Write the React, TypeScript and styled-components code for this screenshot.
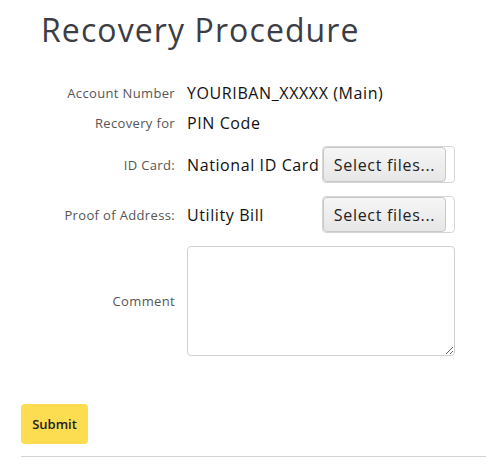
import React from 'react'
import styled, { createGlobalStyle } from 'styled-components'

const GlobalStyle = createGlobalStyle`
  body {
    margin: 0;
    background: #fff;
    font-family: 'Open Sans', 'Noto Sans', sans-serif;
  }
`

const Page = styled.div`
  padding: 0 15px 0 21px;
`

const Title = styled.h1`
  margin: 0;
  padding: 10px 0 0 20px;
  height: 68px;
  box-sizing: border-box;
  font-size: 32px;
  font-weight: 400;
  letter-spacing: 1.1px;
  color: #3c3d45;
  line-height: 40px;
`

const Form = styled.form`
  display: flex;
  flex-direction: column;
`

const Row = styled.div<{ $height: number; $gap?: number }>`
  display: grid;
  grid-template-columns: 154px 268px;
  column-gap: 12px;
  align-items: center;
  height: ${p => p.$height}px;
  margin-top: ${p => p.$gap || 0}px;
`

const Label = styled.label`
  text-align: right;
  font-size: 13px;
  letter-spacing: 0.35px;
  color: #555;
`

const Value = styled.div`
  display: flex;
  align-items: center;
  font-size: 16px;
  letter-spacing: 0.6px;
  color: #111;
`

const FileName = styled.span`
  width: 135px;
  white-space: nowrap;
`

const Upload = styled.div`
  display: flex;
  width: 133px;
  height: 37px;
  box-sizing: border-box;
  border: 1px solid #d5d5d5;
  border-radius: 4px;
`

const SelectButton = styled.button`
  width: 123px;
  height: 35px;
  margin: 0;
  padding: 0;
  box-sizing: border-box;
  border: 1px solid #c8c8c8;
  border-radius: 4px;
  background: linear-gradient(#f6f6f6, #e6e6e6);
  font-family: inherit;
  font-size: 16px;
  letter-spacing: 0.7px;
  color: #222;
`

const Comment = styled.textarea`
  width: 268px;
  height: 110px;
  box-sizing: border-box;
  border: 1px solid #d0d0d0;
  border-radius: 4px;
  resize: both;
`

const Submit = styled.button`
  margin-top: 48px;
  align-self: flex-start;
  width: 67px;
  height: 40px;
  border: none;
  border-radius: 4px;
  background: #fcdc50;
  font-family: inherit;
  font-size: 13px;
  font-weight: 600;
  color: #222;
`

const Divider = styled.hr`
  margin: 12px 0 0;
  border: none;
  border-top: 1px solid #d3d3d3;
`

export default function App() {
  return (
    <Page>
      <GlobalStyle />
      <Title>Recovery Procedure</Title>
      <Form onSubmit={e => e.preventDefault()}>
        <Row $height={30} $gap={10}>
          <Label>Account Number</Label>
          <Value>YOURIBAN_XXXXX (Main)</Value>
        </Row>
        <Row $height={30}>
          <Label>Recovery for</Label>
          <Value>PIN Code</Value>
        </Row>
        <Row $height={37} $gap={8}>
          <Label>ID Card:</Label>
          <Value>
            <FileName>National ID Card</FileName>
            <Upload>
              <SelectButton type='button'>Select files...</SelectButton>
            </Upload>
          </Value>
        </Row>
        <Row $height={37} $gap={13}>
          <Label>Proof of Address:</Label>
          <Value>
            <FileName>Utility Bill</FileName>
            <Upload>
              <SelectButton type='button'>Select files...</SelectButton>
            </Upload>
          </Value>
        </Row>
        <Row $height={110} $gap={13}>
          <Label>Comment</Label>
          <Comment />
        </Row>
        <Submit type='submit'>Submit</Submit>
        <Divider />
      </Form>
    </Page>
  )
}
